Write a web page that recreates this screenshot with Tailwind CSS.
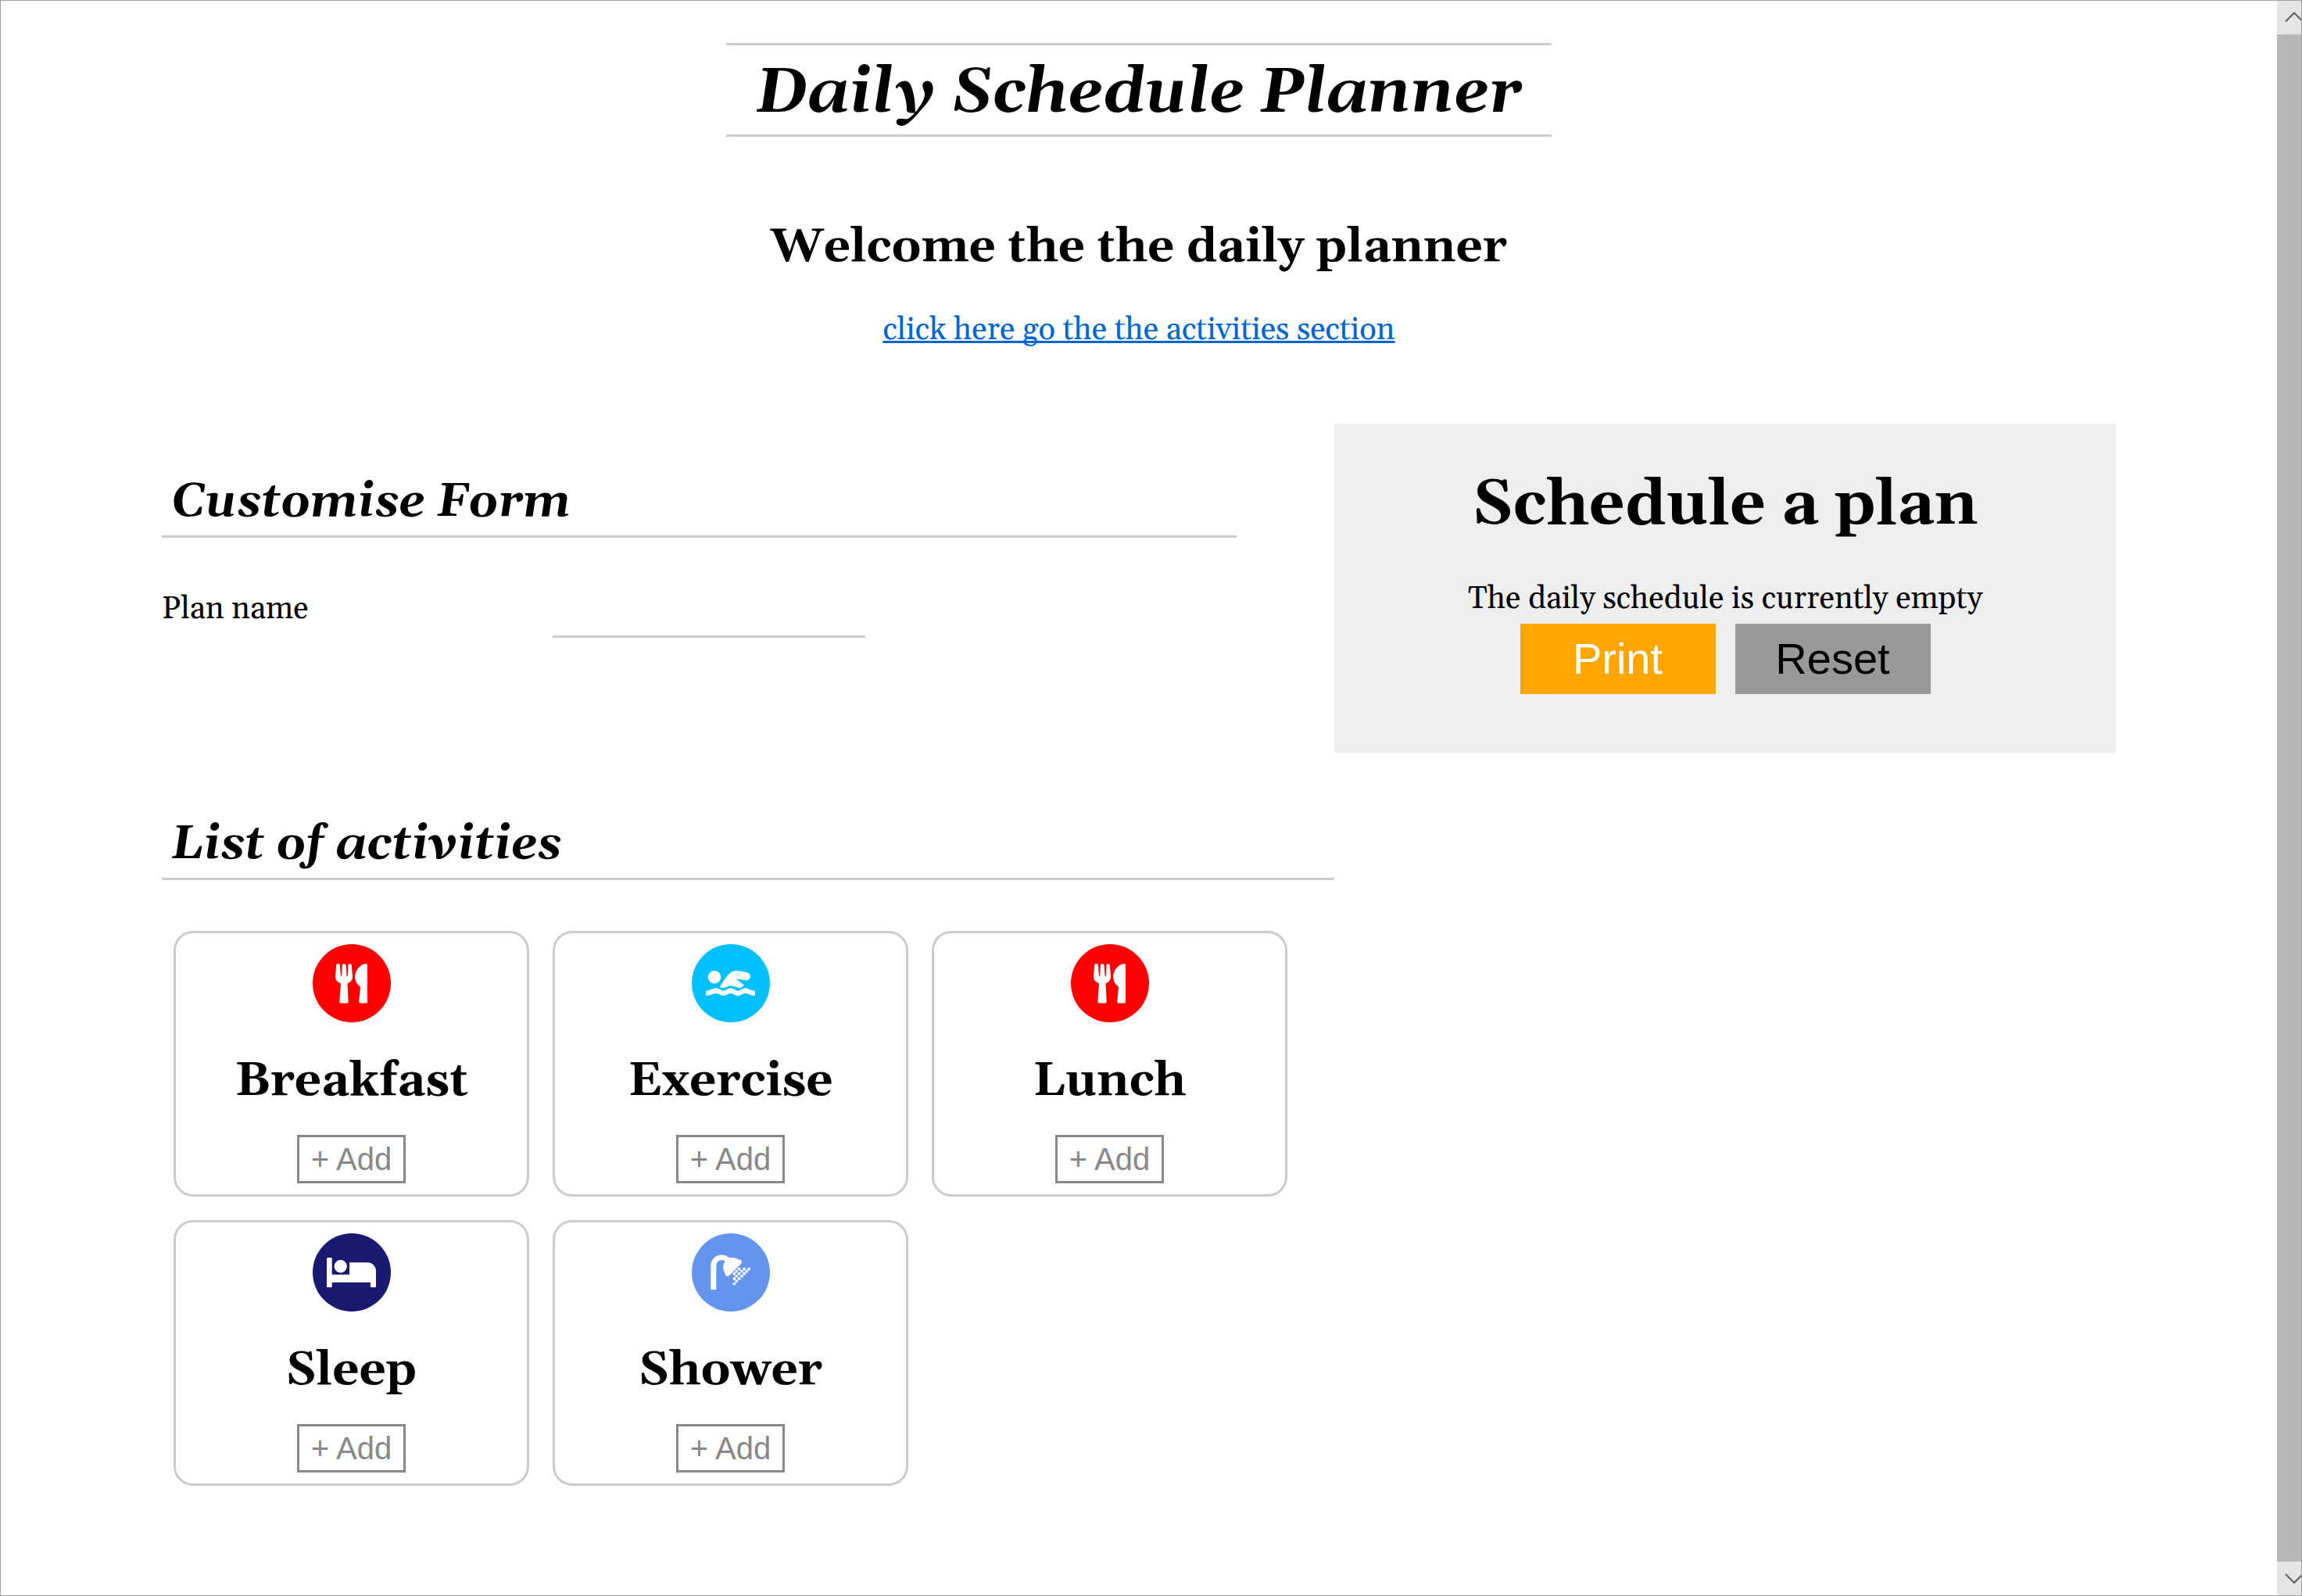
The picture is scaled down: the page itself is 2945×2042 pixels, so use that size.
<!DOCTYPE html>
<html lang="en">
<head>
<meta charset="utf-8">
<meta name="viewport" content="width=device-width, initial-scale=1">
<title>Daily Schedule Planner</title>
<script src="https://cdn.jsdelivr.net/npm/@tailwindcss/browser@4"></script>
</head>
<body class="flex min-h-screen items-stretch border border-[#a0a0a0] bg-white font-['Gelasio',Georgia,serif] text-[40px] leading-[45px] text-black">

<svg class="hidden" aria-hidden="true">
  <symbol id="meal" viewBox="0 0 100 100">
    <path fill="#fff" d="M32.5 25C30.7 25 30.3 26 30.2 27L29 41C28.8 46 32 48.5 36 50L34.3 73.5Q34.3 75.5 36.3 75.5H43.8Q45.8 75.5 45.7 73.5L44.5 50C48.5 48.5 51.2 46 51 41L49.8 27C49.6 24.5 45.5 24.5 45.4 27L44.8 40.5Q44.2 41.5 43.6 40.5L42.6 27C42.4 24.5 38 24.5 37.8 27L37 40.5Q36.4 41.5 36 40.5L34.8 27C34.8 25.5 34 25 32.5 25Z"/>
    <path fill="#fff" d="M68.500 25Q70 25 70 26.500V74Q70 75.500 68.500 75.500H61Q59.200 75.500 59.300 73.500L61 54.500C56 51 54 46 54.200 41C54.600 33 61 25.500 68.500 25Z"/>
  </symbol>
  <symbol id="swim" viewBox="0 0 100 100">
    <g fill="#fff">
      <circle cx="29" cy="42.300" r="8.200"/>
      <path d="M35.700 54.500L44 42.500C47 38.500 50 35 56 34C58 33.800 60 34 62 34.500L70 36C77 37.500 76.500 46 69.500 46.200L56.500 44.500L67 52.500C65 54 63.500 55.800 62 56C57 55.800 54 53.300 50 53.300C46 53.300 44 56 40.500 56C38.500 56 37 55.500 35.700 54.500Z"/>
      <path d="M18 59.700C24 59.500 26 56.300 31 56.300C35.500 56.300 36.500 59.700 40.500 59.700C44.500 59.700 45.500 56.300 49.700 56.300C54 56.300 55 59.700 59 59.700C63 59.700 64 56.300 68.700 56.300C73 56.300 75 59.500 81 59.700V66C74 66 73 63 68.700 63C64.500 63 63.500 66 59 66C54.500 66 54 63 49.700 63C45.500 63 45 66 40.500 66C36 66 35.500 63 31 63C26.500 63 25 66 18 66Z"/>
    </g>
  </symbol>
  <symbol id="bed" viewBox="0 0 100 100">
    <g fill="#fff">
      <circle cx="35.700" cy="42.300" r="8.200"/>
      <path d="M20 31H24.700V52.700H47V37.300H70C76 37.300 81 42 81 48V69H74V62.700H24.700V69H18V32.500Q18 31 20 31Z"/>
    </g>
  </symbol>
  <symbol id="shower" viewBox="0 0 100 100">
    <path fill="none" stroke="#fff" stroke-width="7" d="M27.800 72V42C27.800 29 43 28 47 36"/>
    <path fill="#fff" d="M44 33C48 30 56 30.500 60 33.500C64 33.500 65 36.500 63 39L48 54C45.500 56 42.500 54.500 42.500 51C39.500 47 39.500 40 42 37Z"/>
    <g fill="#fff">
      <circle cx="60.600" cy="45.700" r="1.900"/><circle cx="67" cy="45.700" r="1.900"/><circle cx="73" cy="45.700" r="1.900"/>
      <circle cx="57.300" cy="48.700" r="1.900"/><circle cx="64" cy="48.700" r="1.900"/><circle cx="70" cy="48.700" r="1.900"/>
      <circle cx="54.300" cy="51.700" r="1.900"/><circle cx="60.600" cy="51.700" r="1.900"/><circle cx="67" cy="51.700" r="1.900"/>
      <circle cx="57.300" cy="54.700" r="1.900"/><circle cx="64" cy="54.700" r="1.900"/>
      <circle cx="54.300" cy="58" r="1.900"/><circle cx="60.600" cy="58" r="1.900"/>
      <circle cx="57.300" cy="61" r="1.900"/>
      <circle cx="54.300" cy="64.300" r="1.900"/>
    </g>
  </symbol>
</svg>

<div class="min-w-0 flex-1 pb-[54px]">
  <header class="flex flex-col items-center pt-[54px] text-center">
    <h1 class="border-y-3 border-[#ccc] px-[37px] pt-2.5 text-[80px] leading-[104px] font-bold italic">Daily Schedule Planner</h1>
    <h2 class="mt-[108px] text-[60px] leading-[68px] font-bold">Welcome the the daily planner</h2>
    <a href="#activities" class="mt-[49px] text-[#0066cc] underline decoration-[3px] underline-offset-2 [text-decoration-skip-ink:none]">click here go the the activities section</a>
  </header>

  <main class="mx-auto mt-[97px] flex max-w-[2500px] items-start">
    <div class="w-3/5">
      <form class="mr-[125px]">
        <h2 class="border-b-3 border-[#ccc] pt-[67px] pb-2 pl-3 text-[60px] leading-[68px] font-bold italic">Customise Form</h2>
        <div class="mt-[66px] flex items-start">
          <label for="plan-name" class="w-[500px] pt-[3px]">Plan name</label>
          <input id="plan-name" type="text" class="h-[62px] w-[400px] border-b-3 border-[#ccc] outline-none">
        </div>
      </form>

      <section id="activities" class="mt-[231px]">
        <h2 class="border-b-3 border-[#ccc] pb-2 pl-3 text-[60px] leading-[68px] font-bold italic">List of activities</h2>
        <ul class="mt-[65px] grid grid-cols-3 gap-[30px] pr-[60px] pl-[15px]">
          <li class="flex flex-col items-center rounded-[25px] border-3 border-[#ccc] py-3.5">
            <svg class="size-[100px] rounded-full bg-[#ff0000]" aria-hidden="true"><use href="#meal"/></svg>
            <h3 class="mt-[42px] mb-[34px] text-[60px] leading-[68px] font-bold">Breakfast</h3>
            <button type="button" class="h-[62px] w-[139px] border-3 border-[#888] font-['Liberation_Sans',Arial,sans-serif] text-[#888]">+ Add</button>
          </li>
          <li class="flex flex-col items-center rounded-[25px] border-3 border-[#ccc] py-3.5">
            <svg class="size-[100px] rounded-full bg-[#00bfff]" aria-hidden="true"><use href="#swim"/></svg>
            <h3 class="mt-[42px] mb-[34px] text-[60px] leading-[68px] font-bold">Exercise</h3>
            <button type="button" class="h-[62px] w-[139px] border-3 border-[#888] font-['Liberation_Sans',Arial,sans-serif] text-[#888]">+ Add</button>
          </li>
          <li class="flex flex-col items-center rounded-[25px] border-3 border-[#ccc] py-3.5">
            <svg class="size-[100px] rounded-full bg-[#ff0000]" aria-hidden="true"><use href="#meal"/></svg>
            <h3 class="mt-[42px] mb-[34px] text-[60px] leading-[68px] font-bold">Lunch</h3>
            <button type="button" class="h-[62px] w-[139px] border-3 border-[#888] font-['Liberation_Sans',Arial,sans-serif] text-[#888]">+ Add</button>
          </li>
          <li class="flex flex-col items-center rounded-[25px] border-3 border-[#ccc] py-3.5">
            <svg class="size-[100px] rounded-full bg-[#191970]" aria-hidden="true"><use href="#bed"/></svg>
            <h3 class="mt-[42px] mb-[34px] text-[60px] leading-[68px] font-bold">Sleep</h3>
            <button type="button" class="h-[62px] w-[139px] border-3 border-[#888] font-['Liberation_Sans',Arial,sans-serif] text-[#888]">+ Add</button>
          </li>
          <li class="flex flex-col items-center rounded-[25px] border-3 border-[#ccc] py-3.5">
            <svg class="size-[100px] rounded-full bg-[#6495ed]" aria-hidden="true"><use href="#shower"/></svg>
            <h3 class="mt-[42px] mb-[34px] text-[60px] leading-[68px] font-bold">Shower</h3>
            <button type="button" class="h-[62px] w-[139px] border-3 border-[#888] font-['Liberation_Sans',Arial,sans-serif] text-[#888]">+ Add</button>
          </li>
        </ul>
      </section>
    </div>

    <aside class="w-2/5 bg-[#eee] pt-[59px] pb-[75px] text-center">
      <h1 class="text-[80px] leading-[91px] font-bold">Schedule a plan</h1>
      <p class="mt-[52px]">The daily schedule is currently empty</p>
      <div class="mt-[9px] flex justify-center gap-[25px] font-['Liberation_Sans',Arial,sans-serif] text-[56px]">
        <button type="button" class="h-[90px] w-[250px] bg-[#ffa500] pb-0.5 text-white">Print</button>
        <button type="button" class="h-[90px] w-[250px] bg-[#999] pb-0.5">Reset</button>
      </div>
    </aside>
  </main>
</div>

<!-- scroll track: up arrow, thumb, down arrow -->
<div class="flex w-[31px] shrink-0 flex-col bg-[#e5e5e5]" aria-hidden="true">
  <svg class="h-[43px] w-full" viewBox="0 0 31 43" fill="none" stroke="#606060" stroke-width="2"><path d="M11 26.500L22 15.500L33 26.500"/></svg>
  <div class="flex-1 bg-[#b8b8b8]"></div>
  <svg class="h-[43px] w-full" viewBox="0 0 31 43" fill="none" stroke="#606060" stroke-width="2"><path d="M11 16L22 27L33 16"/></svg>
</div>
</body>
</html>
